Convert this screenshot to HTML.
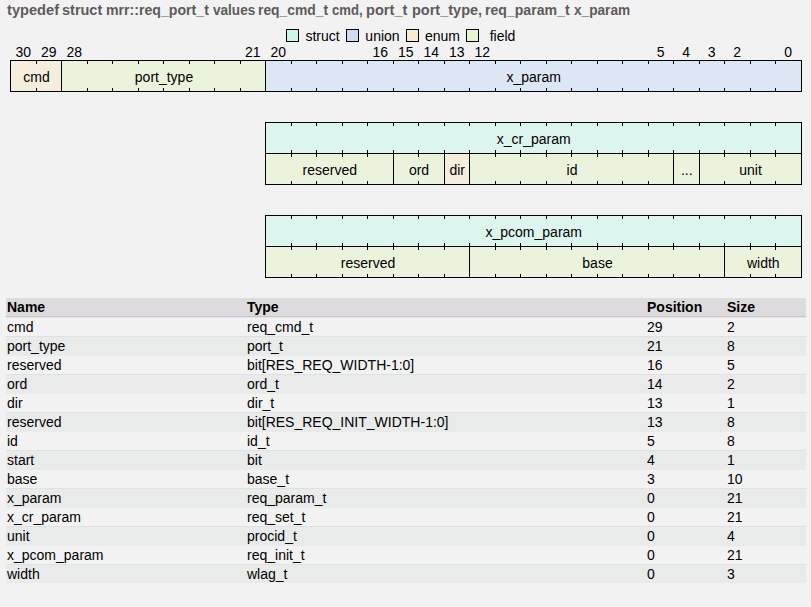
<!DOCTYPE html>
<html><head><meta charset="utf-8"><title>req_port_t</title>
<style>
html,body{margin:0;padding:0;background:#f2f2f2;}
body{width:811px;height:607px;overflow:hidden;position:relative;font-family:"Liberation Sans",Arial,sans-serif;font-size:14px;color:#000;}
h1{position:absolute;left:0;top:0;margin:0;font-size:14.67px;line-height:18px;font-weight:bold;color:#605a5c;white-space:nowrap;}
h1 span{position:absolute;top:1px;display:inline-block;transform-origin:0 0;white-space:nowrap;}
.stripe{position:absolute;left:6px;width:800px;height:19px;background:#e9ebea;border-top:1px solid #dee3e1;}
svg{position:absolute;left:0;top:0;}
svg text{font-family:"Liberation Sans",Arial,sans-serif;font-size:14px;fill:#000;}
table{position:absolute;left:6px;top:298px;width:800px;border-collapse:collapse;table-layout:fixed;}
th,td{padding:0 1px;height:19px;line-height:19px;text-align:left;font-size:14px;white-space:nowrap;overflow:hidden;}
th{background:#dedbde;border-bottom:1px solid #c8c6c8;height:18px;line-height:18px;font-weight:bold;}
td{padding-top:1px;line-height:18px;height:18px;}
</style></head><body>
<h1><span style="left:6.88px;transform:scaleX(0.9991)">typedef </span><span style="left:62.48px;transform:scaleX(0.9883)">struct </span><span style="left:105.54px;transform:scaleX(0.964)">mrr::req_port_t </span><span style="left:212.81px;transform:scaleX(0.9262)">values </span><span style="left:258.25px;transform:scaleX(0.9466)">req_cmd_t </span><span style="left:332.35px;transform:scaleX(0.8954)">cmd, </span><span style="left:366.3px;transform:scaleX(0.9975)">port_t </span><span style="left:411.71px;transform:scaleX(0.9899)">port_type, </span><span style="left:485.34px;transform:scaleX(0.9613)">req_param_t </span><span style="left:574.03px;transform:scaleX(0.9308)">x_param </span></h1>
<div class="stripe" style="top:336px"></div><div class="stripe" style="top:374px"></div><div class="stripe" style="top:412px"></div><div class="stripe" style="top:450px"></div><div class="stripe" style="top:488px"></div><div class="stripe" style="top:526px"></div><div class="stripe" style="top:564px;height:18px"></div>
<div style="position:absolute;left:6px;top:317px;width:800px;height:1px;background:#e6e5e7"></div>
<svg width="811" height="290" viewBox="0 0 811 290" shape-rendering="crispEdges">
<rect x="286.5" y="29.5" width="12" height="12" fill="#ccf5ea" stroke="#000"/>
<text x="322.5" y="41" text-anchor="middle">struct</text>
<rect x="346.5" y="29.5" width="12" height="12" fill="#ccdcf5" stroke="#000"/>
<text x="382.5" y="41" text-anchor="middle">union</text>
<rect x="406.5" y="29.5" width="12" height="12" fill="#f5ebd0" stroke="#000"/>
<text x="442.5" y="41" text-anchor="middle">enum</text>
<rect x="466.5" y="29.5" width="12" height="12" fill="#e4f5cf" stroke="#000"/>
<text x="502.5" y="41" text-anchor="middle">field</text>
<text x="23.25" y="56.5" text-anchor="middle">30</text>
<text x="48.75" y="56.5" text-anchor="middle">29</text>
<text x="74.25" y="56.5" text-anchor="middle">28</text>
<text x="252.75" y="56.5" text-anchor="middle">21</text>
<text x="278.25" y="56.5" text-anchor="middle">20</text>
<text x="380.25" y="56.5" text-anchor="middle">16</text>
<text x="405.75" y="56.5" text-anchor="middle">15</text>
<text x="431.25" y="56.5" text-anchor="middle">14</text>
<text x="456.75" y="56.5" text-anchor="middle">13</text>
<text x="482.25" y="56.5" text-anchor="middle">12</text>
<text x="660.75" y="56.5" text-anchor="middle">5</text>
<text x="686.25" y="56.5" text-anchor="middle">4</text>
<text x="711.75" y="56.5" text-anchor="middle">3</text>
<text x="737.25" y="56.5" text-anchor="middle">2</text>
<text x="788.25" y="56.5" text-anchor="middle">0</text>
<rect x="10.5" y="60.5" width="51.0" height="31.0" fill="#f5eedc" stroke="#000" stroke-width="1"/>
<path d="M36.0 60.5v3.5M36.0 91.5v-3.5" stroke="#000" stroke-width="1" fill="none"/>
<text x="36.5" y="81.5" text-anchor="middle">cmd</text>
<rect x="61.5" y="60.5" width="204.0" height="31.0" fill="#ebf3dc" stroke="#000" stroke-width="1"/>
<path d="M240.0 60.5v3.5M240.0 91.5v-3.5M214.5 60.5v3.5M214.5 91.5v-3.5M189.0 60.5v3.5M189.0 91.5v-3.5M163.5 60.5v3.5M163.5 91.5v-3.5M138.0 60.5v3.5M138.0 91.5v-3.5M112.5 60.5v3.5M112.5 91.5v-3.5M87.0 60.5v3.5M87.0 91.5v-3.5" stroke="#000" stroke-width="1" fill="none"/>
<text x="164.0" y="81.5" text-anchor="middle">port_type</text>
<rect x="265.5" y="60.5" width="535.5" height="31.0" fill="#dce6f5" stroke="#000" stroke-width="1"/>
<path d="M775.5 60.5v3.5M775.5 91.5v-3.5M750.0 60.5v3.5M750.0 91.5v-3.5M724.5 60.5v3.5M724.5 91.5v-3.5M699.0 60.5v3.5M699.0 91.5v-3.5M673.5 60.5v3.5M673.5 91.5v-3.5M648.0 60.5v3.5M648.0 91.5v-3.5M622.5 60.5v3.5M622.5 91.5v-3.5M597.0 60.5v3.5M597.0 91.5v-3.5M571.5 60.5v3.5M571.5 91.5v-3.5M546.0 60.5v3.5M546.0 91.5v-3.5M520.5 60.5v3.5M520.5 91.5v-3.5M495.0 60.5v3.5M495.0 91.5v-3.5M469.5 60.5v3.5M469.5 91.5v-3.5M444.0 60.5v3.5M444.0 91.5v-3.5M418.5 60.5v3.5M418.5 91.5v-3.5M393.0 60.5v3.5M393.0 91.5v-3.5M367.5 60.5v3.5M367.5 91.5v-3.5M342.0 60.5v3.5M342.0 91.5v-3.5M316.5 60.5v3.5M316.5 91.5v-3.5M291.0 60.5v3.5M291.0 91.5v-3.5" stroke="#000" stroke-width="1" fill="none"/>
<text x="533.75" y="81.5" text-anchor="middle">x_param</text>
<rect x="265.5" y="122.5" width="535.5" height="31.0" fill="#dcf5ef" stroke="#000" stroke-width="1"/>
<path d="M775.5 122.5v3.5M775.5 153.5v-3.5M750.0 122.5v3.5M750.0 153.5v-3.5M724.5 122.5v3.5M724.5 153.5v-3.5M699.0 122.5v3.5M699.0 153.5v-3.5M673.5 122.5v3.5M673.5 153.5v-3.5M648.0 122.5v3.5M648.0 153.5v-3.5M622.5 122.5v3.5M622.5 153.5v-3.5M597.0 122.5v3.5M597.0 153.5v-3.5M571.5 122.5v3.5M571.5 153.5v-3.5M546.0 122.5v3.5M546.0 153.5v-3.5M520.5 122.5v3.5M520.5 153.5v-3.5M495.0 122.5v3.5M495.0 153.5v-3.5M469.5 122.5v3.5M469.5 153.5v-3.5M444.0 122.5v3.5M444.0 153.5v-3.5M418.5 122.5v3.5M418.5 153.5v-3.5M393.0 122.5v3.5M393.0 153.5v-3.5M367.5 122.5v3.5M367.5 153.5v-3.5M342.0 122.5v3.5M342.0 153.5v-3.5M316.5 122.5v3.5M316.5 153.5v-3.5M291.0 122.5v3.5M291.0 153.5v-3.5" stroke="#000" stroke-width="1" fill="none"/>
<text x="533.75" y="143.5" text-anchor="middle">x_cr_param</text>
<rect x="265.5" y="153.5" width="127.5" height="31.0" fill="#ebf3dc" stroke="#000" stroke-width="1"/>
<path d="M367.5 153.5v3.5M367.5 184.5v-3.5M342.0 153.5v3.5M342.0 184.5v-3.5M316.5 153.5v3.5M316.5 184.5v-3.5M291.0 153.5v3.5M291.0 184.5v-3.5" stroke="#000" stroke-width="1" fill="none"/>
<text x="329.75" y="174.5" text-anchor="middle">reserved</text>
<rect x="393.0" y="153.5" width="51.0" height="31.0" fill="#ebf3dc" stroke="#000" stroke-width="1"/>
<path d="M418.5 153.5v3.5M418.5 184.5v-3.5" stroke="#000" stroke-width="1" fill="none"/>
<text x="419.0" y="174.5" text-anchor="middle">ord</text>
<rect x="444.0" y="153.5" width="25.5" height="31.0" fill="#f5eedc" stroke="#000" stroke-width="1"/>
<path d="" stroke="#000" stroke-width="1" fill="none"/>
<text x="457.25" y="174.5" text-anchor="middle">dir</text>
<rect x="469.5" y="153.5" width="204.0" height="31.0" fill="#ebf3dc" stroke="#000" stroke-width="1"/>
<path d="M648.0 153.5v3.5M648.0 184.5v-3.5M622.5 153.5v3.5M622.5 184.5v-3.5M597.0 153.5v3.5M597.0 184.5v-3.5M571.5 153.5v3.5M571.5 184.5v-3.5M546.0 153.5v3.5M546.0 184.5v-3.5M520.5 153.5v3.5M520.5 184.5v-3.5M495.0 153.5v3.5M495.0 184.5v-3.5" stroke="#000" stroke-width="1" fill="none"/>
<text x="572.0" y="174.5" text-anchor="middle">id</text>
<rect x="673.5" y="153.5" width="25.5" height="31.0" fill="#ebf3dc" stroke="#000" stroke-width="1"/>
<path d="" stroke="#000" stroke-width="1" fill="none"/>
<text x="686.75" y="174.5" text-anchor="middle">...</text>
<rect x="699.0" y="153.5" width="102.0" height="31.0" fill="#ebf3dc" stroke="#000" stroke-width="1"/>
<path d="M775.5 153.5v3.5M775.5 184.5v-3.5M750.0 153.5v3.5M750.0 184.5v-3.5M724.5 153.5v3.5M724.5 184.5v-3.5" stroke="#000" stroke-width="1" fill="none"/>
<text x="750.5" y="174.5" text-anchor="middle">unit</text>
<rect x="265.5" y="215.5" width="535.5" height="31.0" fill="#dcf5ef" stroke="#000" stroke-width="1"/>
<path d="M775.5 215.5v3.5M775.5 246.5v-3.5M750.0 215.5v3.5M750.0 246.5v-3.5M724.5 215.5v3.5M724.5 246.5v-3.5M699.0 215.5v3.5M699.0 246.5v-3.5M673.5 215.5v3.5M673.5 246.5v-3.5M648.0 215.5v3.5M648.0 246.5v-3.5M622.5 215.5v3.5M622.5 246.5v-3.5M597.0 215.5v3.5M597.0 246.5v-3.5M571.5 215.5v3.5M571.5 246.5v-3.5M546.0 215.5v3.5M546.0 246.5v-3.5M520.5 215.5v3.5M520.5 246.5v-3.5M495.0 215.5v3.5M495.0 246.5v-3.5M469.5 215.5v3.5M469.5 246.5v-3.5M444.0 215.5v3.5M444.0 246.5v-3.5M418.5 215.5v3.5M418.5 246.5v-3.5M393.0 215.5v3.5M393.0 246.5v-3.5M367.5 215.5v3.5M367.5 246.5v-3.5M342.0 215.5v3.5M342.0 246.5v-3.5M316.5 215.5v3.5M316.5 246.5v-3.5M291.0 215.5v3.5M291.0 246.5v-3.5" stroke="#000" stroke-width="1" fill="none"/>
<text x="533.75" y="236.5" text-anchor="middle">x_pcom_param</text>
<rect x="265.5" y="246.5" width="204.0" height="31.0" fill="#ebf3dc" stroke="#000" stroke-width="1"/>
<path d="M444.0 246.5v3.5M444.0 277.5v-3.5M418.5 246.5v3.5M418.5 277.5v-3.5M393.0 246.5v3.5M393.0 277.5v-3.5M367.5 246.5v3.5M367.5 277.5v-3.5M342.0 246.5v3.5M342.0 277.5v-3.5M316.5 246.5v3.5M316.5 277.5v-3.5M291.0 246.5v3.5M291.0 277.5v-3.5" stroke="#000" stroke-width="1" fill="none"/>
<text x="368.0" y="267.5" text-anchor="middle">reserved</text>
<rect x="469.5" y="246.5" width="255.0" height="31.0" fill="#ebf3dc" stroke="#000" stroke-width="1"/>
<path d="M699.0 246.5v3.5M699.0 277.5v-3.5M673.5 246.5v3.5M673.5 277.5v-3.5M648.0 246.5v3.5M648.0 277.5v-3.5M622.5 246.5v3.5M622.5 277.5v-3.5M597.0 246.5v3.5M597.0 277.5v-3.5M571.5 246.5v3.5M571.5 277.5v-3.5M546.0 246.5v3.5M546.0 277.5v-3.5M520.5 246.5v3.5M520.5 277.5v-3.5M495.0 246.5v3.5M495.0 277.5v-3.5" stroke="#000" stroke-width="1" fill="none"/>
<text x="597.5" y="267.5" text-anchor="middle">base</text>
<rect x="724.5" y="246.5" width="76.5" height="31.0" fill="#ebf3dc" stroke="#000" stroke-width="1"/>
<path d="M775.5 246.5v3.5M775.5 277.5v-3.5M750.0 246.5v3.5M750.0 277.5v-3.5" stroke="#000" stroke-width="1" fill="none"/>
<text x="763.25" y="267.5" text-anchor="middle">width</text>
</svg>
<table><colgroup><col style="width:240px"><col style="width:400px"><col style="width:80px"><col style="width:80px"></colgroup>
<thead><tr><th>Name</th><th>Type</th><th>Position</th><th>Size</th></tr></thead>
<tbody><tr><td>cmd</td><td>req_cmd_t</td><td>29</td><td>2</td></tr><tr><td>port_type</td><td>port_t</td><td>21</td><td>8</td></tr><tr><td>reserved</td><td>bit[RES_REQ_WIDTH-1:0]</td><td>16</td><td>5</td></tr><tr><td>ord</td><td>ord_t</td><td>14</td><td>2</td></tr><tr><td>dir</td><td>dir_t</td><td>13</td><td>1</td></tr><tr><td>reserved</td><td>bit[RES_REQ_INIT_WIDTH-1:0]</td><td>13</td><td>8</td></tr><tr><td>id</td><td>id_t</td><td>5</td><td>8</td></tr><tr><td>start</td><td>bit</td><td>4</td><td>1</td></tr><tr><td>base</td><td>base_t</td><td>3</td><td>10</td></tr><tr><td>x_param</td><td>req_param_t</td><td>0</td><td>21</td></tr><tr><td>x_cr_param</td><td>req_set_t</td><td>0</td><td>21</td></tr><tr><td>unit</td><td>procid_t</td><td>0</td><td>4</td></tr><tr><td>x_pcom_param</td><td>req_init_t</td><td>0</td><td>21</td></tr><tr><td>width</td><td>wlag_t</td><td>0</td><td>3</td></tr></tbody></table>
</body></html>
